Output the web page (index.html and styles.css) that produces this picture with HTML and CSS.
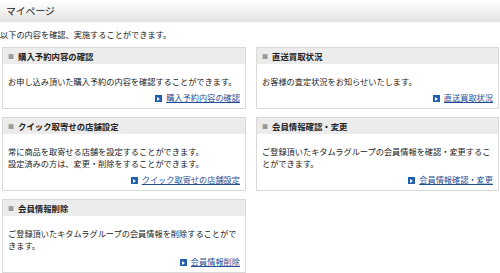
FILE: index.html
```html
<!DOCTYPE html>
<html lang="ja">
<head>
    <meta charset="UTF-8">
    <title>マイページ</title>
    <link rel="stylesheet" href="styles.css">
</head>
<body>

    <div class="page-head">マイページ</div>
    <p class="lead">以下の内容を確認、実施することができます。</p>

    <div class="menu">
        <div class="box">
            <div class="box-head"><span class="mark">■</span>購入予約内容の確認</div>
            <div class="box-body">
                <p class="box-text">お申し込み頂いた購入予約の内容を確認することができます。</p>
                <p class="box-link"><a href="#"><span class="arrow"></span>購入予約内容の確認</a></p>
            </div>
        </div>

        <div class="box">
            <div class="box-head"><span class="mark">■</span>直送買取状況</div>
            <div class="box-body">
                <p class="box-text">お客様の査定状況をお知らせいたします。</p>
                <p class="box-link"><a href="#"><span class="arrow"></span>直送買取状況</a></p>
            </div>
        </div>

        <div class="box">
            <div class="box-head"><span class="mark">■</span>クイック取寄せの店舗設定</div>
            <div class="box-body">
                <p class="box-text">常に商品を取寄せる店舗を設定することができます。<br>設定済みの方は、変更・削除をすることができます。</p>
                <p class="box-link"><a href="#"><span class="arrow"></span>クイック取寄せの店舗設定</a></p>
            </div>
        </div>

        <div class="box">
            <div class="box-head"><span class="mark">■</span>会員情報確認・変更</div>
            <div class="box-body">
                <p class="box-text">ご登録頂いたキタムラグループの会員情報を確認・変更することができます。</p>
                <p class="box-link"><a href="#"><span class="arrow"></span>会員情報確認・変更</a></p>
            </div>
        </div>

        <div class="box">
            <div class="box-head"><span class="mark">■</span>会員情報削除</div>
            <div class="box-body">
                <p class="box-text">ご登録頂いたキタムラグループの会員情報を削除することができます。</p>
                <p class="box-link"><a href="#"><span class="arrow"></span>会員情報削除</a></p>
            </div>
        </div>
    </div>

</body>
</html>
```

FILE: styles.css
```css
body {
    margin: 0;
    font-family: "Noto Sans CJK JP", "Noto Sans", sans-serif;
    font-size: 8.2px;
    color: #222;
    background-color: #fff;
}

p {
    margin: 0;
}

.page-head {
    height: 22px;
    line-height: 22px;
    padding-left: 6px;
    font-size: 9.8px;
    color: #222;
    background: linear-gradient(#ffffff, #e3e3e3);
}

.lead {
    margin-top: 6px;
    line-height: 12px;
}

.menu {
    display: grid;
    grid-template-columns: 244px 243px;
    column-gap: 10px;
    row-gap: 8px;
    padding: 0 2px;
    margin-top: 7px;
}

.box {
    border: 1px solid #d9d9d9;
    background-color: #fff;
}

.box-head {
    height: 16px;
    line-height: 16px;
    padding-left: 5px;
    font-size: 8.4px;
    font-weight: bold;
    color: #222;
    background-color: #ececec;
}

.mark {
    font-size: 6px;
    color: #9a9a9a;
    margin-right: 4px;
    vertical-align: 1px;
}

.box-body {
    padding: 11px 5px 5px;
}

.box-text {
    line-height: 12px;
}

.box-link {
    margin-top: 4px;
    line-height: 12px;
    text-align: right;
}

.box-link a {
    color: #1f4e96;
    text-decoration: underline;
}

.arrow {
    display: inline-block;
    width: 7px;
    height: 7px;
    margin-right: 4px;
    vertical-align: -1px;
    background: #1f5fae;
    position: relative;
}

.arrow::after {
    content: "";
    position: absolute;
    left: 2px;
    top: 1.5px;
    border-left: 3.5px solid #fff;
    border-top: 2px solid transparent;
    border-bottom: 2px solid transparent;
}
```
